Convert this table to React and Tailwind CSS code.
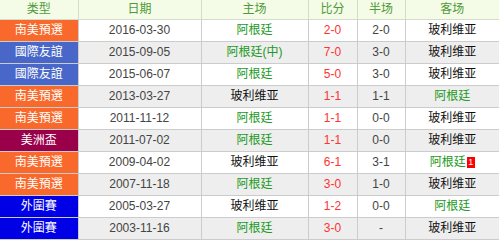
const rows = [
  { type: "南美預選", tc: "bg-[#f8692b]", date: "2016-03-30", home: "阿根廷", hg: true, score: "2-0", half: "2-0", away: "玻利维亚", ag: false },
  { type: "國際友誼", tc: "bg-[#4867c8]", date: "2015-09-05", home: "阿根廷(中)", hg: true, score: "7-0", half: "3-0", away: "玻利维亚", ag: false },
  { type: "國際友誼", tc: "bg-[#4867c8]", date: "2015-06-07", home: "阿根廷", hg: true, score: "5-0", half: "3-0", away: "玻利维亚", ag: false },
  { type: "南美預選", tc: "bg-[#f8692b]", date: "2013-03-27", home: "玻利维亚", hg: false, score: "1-1", half: "1-1", away: "阿根廷", ag: true },
  { type: "南美預選", tc: "bg-[#f8692b]", date: "2011-11-12", home: "阿根廷", hg: true, score: "1-1", half: "0-0", away: "玻利维亚", ag: false },
  { type: "美洲盃", tc: "bg-[#990049]", date: "2011-07-02", home: "阿根廷", hg: true, score: "1-1", half: "0-0", away: "玻利维亚", ag: false },
  { type: "南美預選", tc: "bg-[#f8692b]", date: "2009-04-02", home: "玻利维亚", hg: false, score: "6-1", half: "3-1", away: "阿根廷", ag: true, card: 1 },
  { type: "南美預選", tc: "bg-[#f8692b]", date: "2007-11-18", home: "阿根廷", hg: true, score: "3-0", half: "1-0", away: "玻利维亚", ag: false },
  { type: "外圍賽", tc: "bg-[#0000e6]", date: "2005-03-27", home: "玻利维亚", hg: false, score: "1-2", half: "0-0", away: "阿根廷", ag: true },
  { type: "外圍賽", tc: "bg-[#0000e6]", date: "2003-11-16", home: "阿根廷", hg: true, score: "3-0", half: "-", away: "玻利维亚", ag: false },
];

export default function App() {
  return (
    <div className="w-[499px] h-[244px] bg-white overflow-hidden text-[12px] font-['Liberation_Sans','Noto_Sans_CJK_SC',sans-serif]">
      <table className="w-[499px] table-fixed border-collapse">
        <colgroup>
          <col className="w-[78px]" />
          <col className="w-[123px]" />
          <col className="w-[107px]" />
          <col className="w-[49px]" />
          <col className="w-[48px]" />
          <col className="w-[94px]" />
        </colgroup>
        <thead>
          <tr className="h-[19px] bg-[#f4fbe6] text-[#4e9a3a]">
            {["类型", "日期", "主场", "比分", "半场", "客场"].map((h, i) => (
              <th key={h} className={`font-normal text-center border-b border-[#cfd6c4] ${i > 0 ? "border-l" : ""} border-[#d6dccb]`}>{h}</th>
            ))}
          </tr>
        </thead>
        <tbody>
          {rows.map((r, i) => (
            <tr key={i} className={`h-[22px] ${i % 2 ? "bg-[#eeeeee]" : "bg-white"}`}>
              <td className={`${r.tc} text-white text-center border-b border-[#cccccc]`}>{r.type}</td>
              <td className="text-center text-[#444] border-l border-b border-[#cccccc]">{r.date}</td>
              <td className={`text-center border-l border-b border-[#cccccc] ${r.hg ? "text-[#229922]" : "text-[#111]"}`}>{r.home}</td>
              <td className="text-center text-[#ff3333] border-l border-b border-[#cccccc]">{r.score}</td>
              <td className="text-center text-[#444] border-l border-b border-[#cccccc]">{r.half}</td>
              <td className={`text-center border-l border-b border-[#cccccc] ${r.ag ? "text-[#229922]" : "text-[#111]"}`}>
                {r.away}
                {r.card && (
                  <span className="inline-block align-middle ml-[1px] w-[8px] h-[11px] leading-[11px] bg-[#ff0000] text-white text-[9px] text-center">{r.card}</span>
                )}
              </td>
            </tr>
          ))}
        </tbody>
      </table>
    </div>
  );
}
